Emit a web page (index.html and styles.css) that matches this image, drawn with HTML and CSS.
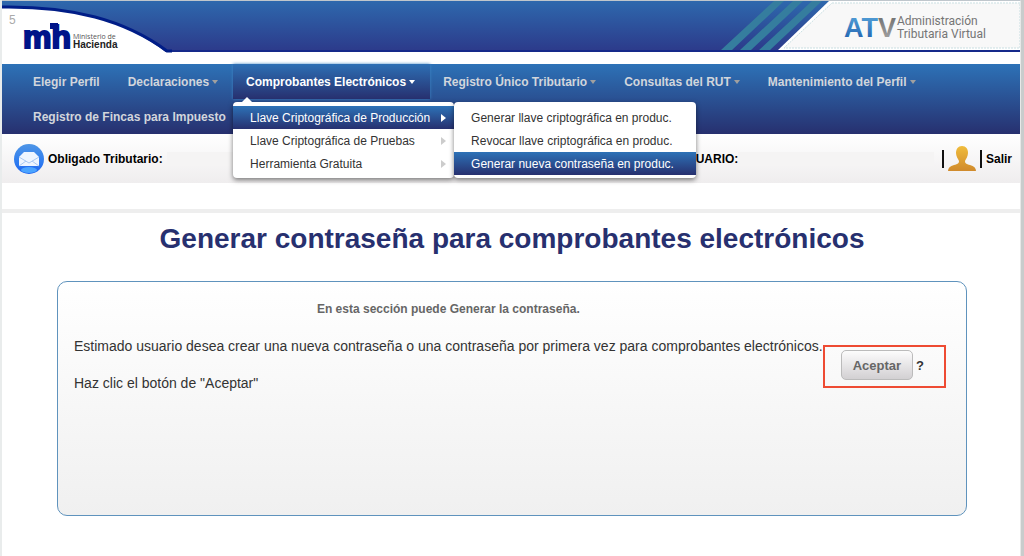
FILE: index.html
```html
<!doctype html>
<html lang="es">
	<head>
		<meta charset="UTF-8" />
		<title>Administración Tributaria Virtual</title>
		<link rel="stylesheet" href="styles.css">
	</head>
	<body>
		<div class="page">
			<header class="banner">
				<svg class="logo" width="170" height="52" viewBox="0 0 170 52" role="img" aria-label="Ministerio de Hacienda">
					<path d="M0 6 C70 5 123 19 165 52 H0 Z" fill="#fff" />
					<path d="M0 6 C70 5 123 19 165 50 H170" fill="none" stroke="#001d87" stroke-width="3" />
					<text x="7" y="23" class="logo-num">5</text>
					<text x="21" y="47" class="logo-mh">mh</text>
					<rect x="48" y="22" width="8" height="6" fill="#001489" />
					<text x="71" y="38" class="logo-min">Ministerio de</text>
					<text x="71" y="47" class="logo-hac">Hacienda</text>
				</svg>
				<svg class="atv" width="300" height="51" viewBox="0 0 300 51" role="img" aria-label="ATV Administración Tributaria Virtual">
					<defs>
						<linearGradient id="blue" x1="0" y1="0" x2="0" y2="1">
							<stop offset="0.2" stop-color="#4c97d2" />
							<stop offset="1" stop-color="#1b5cab" />
						</linearGradient>
						<linearGradient id="grey" x1="0" y1="0" x2="0" y2="1">
							<stop offset="0.2" stop-color="#777" />
							<stop offset="1" stop-color="#aaa" />
						</linearGradient>
					</defs>
					<path d="M54 0H64L12 49H1Z M73 0H83L31 49H20Z M92 0H102L50 49H39Z" fill="#357d9e" />
					<path d="M109 0H300V49H58Z" fill="#fff" />
					<path d="M112 2H300V47H64Z" fill="#f8f8f8" stroke="#c9dfe2" stroke-width="1" stroke-dasharray="2 1" />
					<text x="124" y="36" class="atv-big" fill="url(#blue)">AT<tspan fill="url(#grey)">V</tspan></text>
					<text x="177" y="24" class="atv-text">Administración</text>
					<text x="177" y="37" class="atv-text">Tributaria Virtual</text>
				</svg>
			</header>

			<nav>
				<ul class="menu">
					<li><a href="#">Elegir Perfil</a></li>
					<li><a href="#">Declaraciones<i class="caret"></i></a></li>
					<li class="active">
						<a href="#">Comprobantes Electrónicos<i class="caret"></i></a>
						<ul class="dropdown">
							<li class="selected">
								<a href="#">Llave Criptográfica de Producción<i class="arrow"></i></a>
								<ul class="submenu">
									<li><a href="#">Generar llave criptográfica en produc.</a></li>
									<li><a href="#">Revocar llave criptográfica en produc.</a></li>
									<li class="selected"><a href="#">Generar nueva contraseña en produc.</a></li>
								</ul>
							</li>
							<li><a href="#">Llave Criptográfica de Pruebas<i class="arrow"></i></a></li>
							<li><a href="#">Herramienta Gratuita<i class="arrow"></i></a></li>
						</ul>
					</li>
					<li><a href="#">Registro Único Tributario<i class="caret"></i></a></li>
					<li><a href="#">Consultas del RUT<i class="caret"></i></a></li>
					<li><a href="#">Mantenimiento del Perfil<i class="caret"></i></a></li>
					<li><a href="#">Registro de Fincas para Impuesto</a></li>
				</ul>
			</nav>

			<div class="userbar">
				<svg width="30" height="30" viewBox="0 0 30 30" aria-hidden="true">
					<defs>
						<linearGradient id="ball" x1="0" y1="0" x2="0" y2="1">
							<stop offset="0" stop-color="#4f96e6" />
							<stop offset="0.6" stop-color="#2f7df0" />
							<stop offset="1" stop-color="#1d63ee" />
						</linearGradient>
					</defs>
					<circle cx="15" cy="15" r="15" fill="url(#ball)" />
					<ellipse cx="15" cy="26" rx="8" ry="3" fill="#4ba4ff" />
					<path d="M5 13 L10 8 H20 L25 13 V22 H5Z" fill="#eef5ff" />
					<path d="M5 13 L15 19 L25 13 M5 22 L12 17 M25 22 L18 17" fill="none" stroke="#a9c8f2" stroke-width="1" />
				</svg>
				<span class="taxpayer">Obligado Tributario:</span>
				<span class="blank wide"></span>
				<span class="user">USUARIO:</span>
				<span class="blank"></span>
				<span class="bar"></span>
				<svg width="28" height="26" viewBox="0 0 28 26" aria-hidden="true">
					<defs>
						<linearGradient id="gold" x1="0" y1="0" x2="0" y2="1">
							<stop offset="0" stop-color="#f0bc3c" />
							<stop offset="1" stop-color="#d08a2c" />
						</linearGradient>
					</defs>
					<path d="M14 0 C18 0 20 3 20 7 C20 10 18 13 17 15 C17 18 19 18 22 19 C26 20 28 22 28 25 H0 C0 22 2 20 6 19 C9 18 11 18 11 15 C10 13 8 10 8 7 C8 3 10 0 14 0Z" fill="url(#gold)" />
				</svg>
				<span class="bar"></span>
				<a class="exit" href="#">Salir</a>
			</div>

			<main>
				<h1>Generar contraseña para comprobantes electrónicos</h1>
				<section class="panel">
					<div class="message">
						<h2>En esta sección puede Generar la contraseña.</h2>
						<p>Estimado usuario desea crear una nueva contraseña o una contraseña por primera vez para comprobantes electrónicos.</p>
						<p>Haz clic el botón de "Aceptar"</p>
					</div>
					<div class="action">
						<button type="button">Aceptar</button>
						<b>?</b>
					</div>
				</section>
			</main>
		</div>
	</body>
</html>
```
FILE: styles.css
```css
* {
	margin: 0;
	padding: 0;
	box-sizing: border-box;
}
body {
	background: linear-gradient(90deg, #e9ecec 50%, #c9cccc 50%);
	font-family: "Liberation Sans", Arial, sans-serif;
	font-size: 12px;
	color: #333;
}
a {
	color: inherit;
	text-decoration: none;
}
ul {
	list-style: none;
}
.page {
	min-height: 100vh;
	margin: 0 3px 0 2px;
	background: #fff;
	border-top: 1px solid #bfc6cc;
	border-right: 1px solid #e8e8e8;
}

/* banner */
.banner {
	display: flex;
	justify-content: space-between;
	height: 51px;
	margin-bottom: 12px;
	background: linear-gradient(#2e68ad, #2c3b8b);
	border-bottom: 2px solid #15298a;
}
.banner svg {
	display: block;
	flex: none;
}
.logo-num {
	font-size: 12px;
	fill: #aaa;
}
.logo-mh {
	font: bold 32px "Liberation Sans", sans-serif;
	fill: #001489;
	stroke: #001489;
	stroke-width: 2px;
}
.logo-min {
	font: 7px "Open Sans", sans-serif;
	fill: #555;
}
.logo-hac {
	font: bold 10px "Liberation Sans", sans-serif;
	fill: #222;
}
.atv-big {
	font: bold 27px "Liberation Sans", sans-serif;
}
.atv-text {
	font: 13px "Liberation Sans", sans-serif;
	font: 12px Roboto, sans-serif;
	fill: #757575;
}

/* menu */
.menu {
	display: flex;
	flex-wrap: wrap;
	padding: 0 18px;
	background: linear-gradient(#2d72b7, #27306f);
}
.menu > li {
	position: relative;
}
.menu > li > a {
	display: flex;
	align-items: center;
	height: 35px;
	padding: 0 15px 0 13px;
	font-weight: bold;
	color: #d2d6dc;
	white-space: nowrap;
}
.menu > .active > a {
	color: #fff;
	background: linear-gradient(#2d6fb4, #27306f);
	box-shadow: 0 0 3px #3f86c4;
}
.caret {
	margin-left: 3px;
	border: 3px solid transparent;
	border-top: 4px solid #a0a0a0;
	border-bottom: 0;
}
.active .caret {
	border-top-color: #fff;
}
.dropdown,
.submenu {
	position: absolute;
	z-index: 2;
	padding: 4px 0 3px;
	background: #fff;
	border-radius: 4px;
	box-shadow: 0 2px 5px rgba(0, 0, 0, 0.5);
	white-space: nowrap;
}
.dropdown {
	top: 38px;
	left: 0;
	width: 221px;
}
.dropdown::before {
	content: "";
	position: absolute;
	top: -5px;
	left: 8px;
	border: 6px solid transparent;
	border-top: 0;
	border-bottom-color: #fff;
}
.submenu {
	top: 0;
	left: 100%;
	width: 242px;
}
.dropdown a {
	display: flex;
	align-items: center;
	justify-content: space-between;
	height: 23px;
	padding: 0 8px 0 17px;
	color: #333;
}
.dropdown .selected > a {
	color: #fff;
	background: linear-gradient(#2d72b7, #27306f);
}
.arrow {
	border: 4px solid transparent;
	border-left: 5px solid #ccc;
	border-right: 0;
}
.selected > a .arrow {
	border-left-color: #fff;
}

/* user bar */
.userbar {
	display: flex;
	align-items: center;
	height: 49px;
	padding: 0 8px 0 12px;
	background: linear-gradient(#fff, #efedee);
	font-weight: bold;
	color: #000;
}
.taxpayer {
	margin-left: 4px;
}
.blank {
	flex: 21;
	height: 14px;
	margin: 0 4px 0 0;
	background: #f5f4f4;
}
.wide {
	flex: 55;
	margin: 0 0 0 4px;
}
.bar {
	width: 2px;
	height: 18px;
	margin: 0 4px;
	background: #111;
}

/* content */
main {
	margin-top: 26px;
	padding: 0 53px 0 55px;
	border-top: 4px solid #eee;
}
h1 {
	padding: 9px 0 26px;
	font-size: 28px;
	line-height: 33px;
	text-align: center;
	white-space: nowrap;
	color: #27306f;
}
.panel {
	display: flex;
	align-items: flex-start;
	min-height: 235px;
	padding: 18px 20px 18px 16px;
	border: 1px solid #5f93bd;
	border-radius: 10px;
	background: linear-gradient(#fff, #f0f0f0);
}
.message {
	flex: 1;
	font-size: 14px;
	line-height: 18px;
}
h2 {
	font-size: 12px;
	line-height: 18px;
	text-align: center;
	color: #666;
}
.message p {
	margin-top: 19px;
	white-space: nowrap;
}
.action {
	display: flex;
	align-items: center;
	width: 124px;
	margin-top: 45px;
	padding: 3px 16px 6px;
	border: 2px solid #ee4b33;
	font-size: 13px;
}
button {
	height: 30px;
	padding: 0 11px;
	margin-right: 3px;
	border: 1px solid #bbb;
	border-radius: 5px;
	background: linear-gradient(#fcfcfc, #d2d0d2);
	font: bold 13px "Liberation Sans", Arial, sans-serif;
	color: #666;
}
```
